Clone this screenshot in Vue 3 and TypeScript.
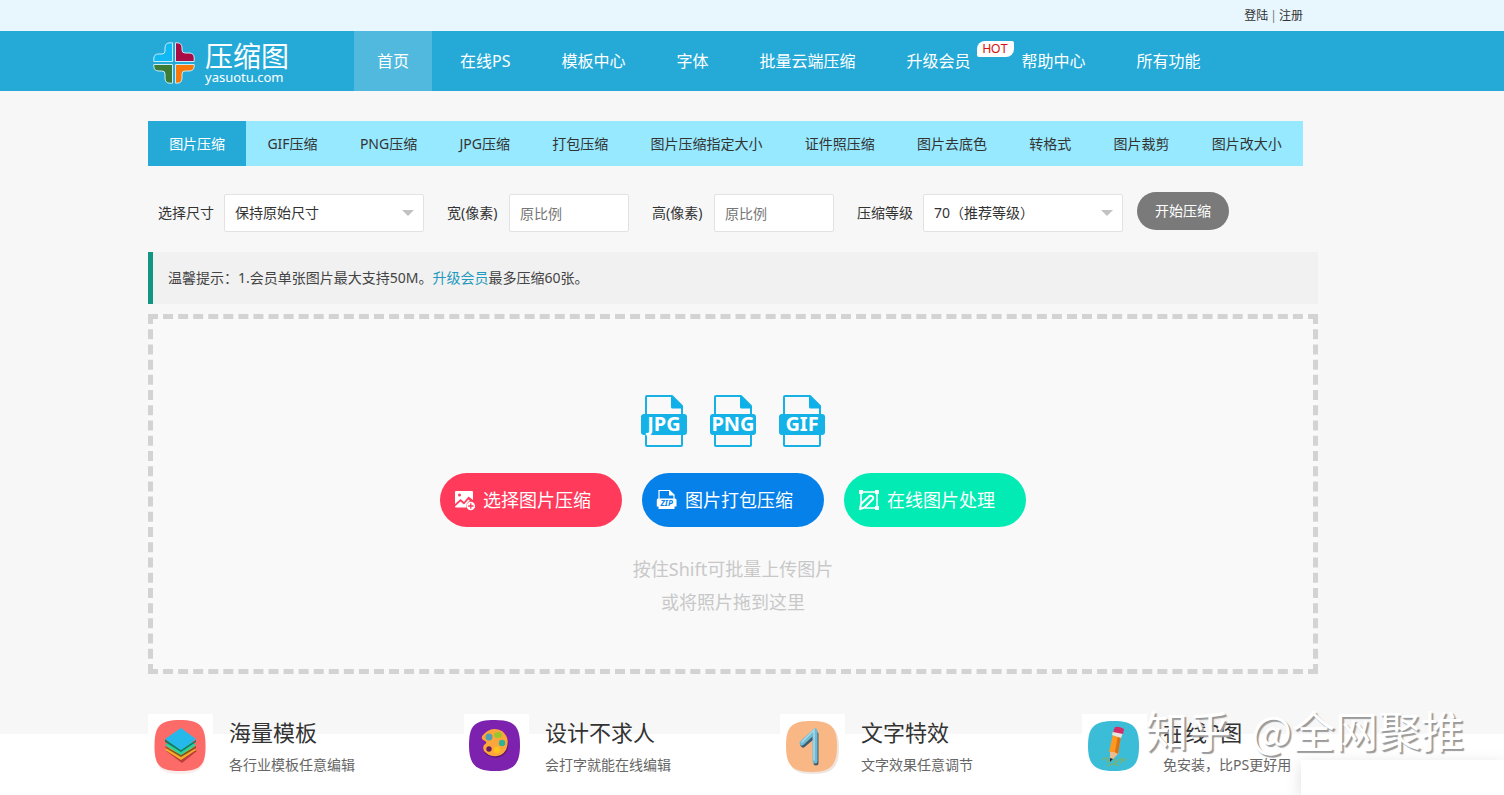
<script setup lang="ts">
import { ref } from 'vue'

interface NavItem {
  label: string
  hot?: boolean
}

const navItems: NavItem[] = [
  { label: '首页' },
  { label: '在线PS' },
  { label: '模板中心' },
  { label: '字体' },
  { label: '批量云端压缩' },
  { label: '升级会员', hot: true },
  { label: '帮助中心' },
  { label: '所有功能' },
]

const tabs: string[] = [
  '图片压缩', 'GIF压缩', 'PNG压缩', 'JPG压缩', '打包压缩', '图片压缩指定大小',
  '证件照压缩', '图片去底色', '转格式', '图片裁剪', '图片改大小',
]

const formats: string[] = ['JPG', 'PNG', 'GIF']

const activeNav = ref(0)
const activeTab = ref(0)
const size = ref('保持原始尺寸')
const level = ref('70（推荐等级）')
const imageWidth = ref('')
const imageHeight = ref('')
</script>

<template>
  <div class="page">
    <div class="topbar">
      <div class="container account">
        <a href="#">登陆</a><span class="bar">|</span><a href="#">注册</a>
      </div>
    </div>

    <header class="header">
      <div class="container header-inner">
        <a class="logo" href="#">
          <svg class="logo-mark" viewBox="0 0 42 42" width="42" height="42" aria-hidden="true">
            <g stroke="#c9ecf8" stroke-width="1" stroke-linejoin="round">
              <path fill="#10b8f4" d="M19.500.8V19.500H.8V17Q.8 12 5.500 12H9Q12 12 12 9V6Q12 .8 17 .8Z" />
              <path fill="#a90b44" d="M22.500.8H24Q29 .8 29 6V8Q29 11 32 11H36Q41.200 11 41.200 16V19.500H22.500Z" />
              <path fill="#3d7c36" d="M.8 22.500H19.500V41.200H17Q12 41.200 12 36V32Q12 29 9 29H6Q.8 29 .8 24Z" />
              <path fill="#fa7808" d="M22.500 22.500H41.200V24Q41.200 29 36 29H32Q29 29 29 32V36Q29 41.200 24 41.200H22.500Z" />
            </g>
          </svg>
          <span class="logo-text">
            <span class="logo-name">压缩图</span>
            <span class="logo-domain">yasuotu.com</span>
          </span>
        </a>
        <nav class="nav">
          <a
            v-for="(item, i) in navItems"
            :key="item.label"
            href="#"
            :class="{ active: i === activeNav }"
            @click.prevent="activeNav = i"
          >{{ item.label }}<span v-if="item.hot" class="hot">HOT</span></a>
        </nav>
      </div>
    </header>

    <main class="main">
      <div class="container">
        <nav class="tabs">
          <a
            v-for="(tab, i) in tabs"
            :key="tab"
            href="#"
            :class="{ active: i === activeTab }"
            @click.prevent="activeTab = i"
          >{{ tab }}</a>
        </nav>

        <form class="options" @submit.prevent>
          <div class="field">
            <label for="size">选择尺寸</label>
            <div class="select">
              <select id="size" v-model="size">
                <option>保持原始尺寸</option>
              </select>
            </div>
          </div>
          <div class="field">
            <label for="width">宽(像素)</label>
            <input id="width" v-model="imageWidth" type="text" placeholder="原比例" />
          </div>
          <div class="field">
            <label for="height">高(像素)</label>
            <input id="height" v-model="imageHeight" type="text" placeholder="原比例" />
          </div>
          <div class="field">
            <label for="level">压缩等级</label>
            <div class="select">
              <select id="level" v-model="level">
                <option>70（推荐等级）</option>
              </select>
            </div>
          </div>
          <button class="start" type="submit">开始压缩</button>
        </form>

        <p class="notice">温馨提示：1.会员单张图片最大支持50M。<a href="#">升级会员</a>最多压缩60张。</p>

        <section class="dropzone">
          <div class="formats">
            <svg v-for="name in formats" :key="name" viewBox="0 0 46 54" width="46" height="54">
              <path fill="none" stroke="#17b1e4" stroke-width="2" stroke-linejoin="round" d="M5 20V3Q5 2 6 2H31L41 12V20M5 38V51Q5 52 6 52H40Q41 52 41 51V38" />
              <path fill="#0db0e8" d="M30 1.500L41.500 13V14.500H31.500Q30 14.500 30 13Z" />
              <rect y="20" width="46" height="21" rx="3" fill="#14b2e6" />
              <text x="23" y="37" text-anchor="middle" class="format-name">{{ name }}</text>
            </svg>
          </div>
          <div class="actions">
            <button type="button" class="red">
              <svg viewBox="0 0 22 22" width="22" height="22" aria-hidden="true">
                <path fill="#fff" fill-rule="evenodd" d="M2 2H18Q19 2 19 3V11L14.500 7.500L10 13L6.500 10L1 15V3Q1 2 2 2ZM5.500 4.500A1.500 1.500 0 1 0 5.500 7.500A1.500 1.500 0 1 0 5.500 4.500Z" />
                <path fill="#fff" d="M1 17.500L6.500 12.500L10 15.500L14.300 10.500L16 12Q12 13 12.300 18.500H2Q1 18.500 1 17.500Z" />
                <circle cx="16.800" cy="17" r="4.300" fill="#fff" />
                <path stroke="#ff3a5a" stroke-width="1.300" d="M16.800 14.300V19.700M14.100 17H19.500" />
              </svg>选择图片压缩
            </button>
            <button type="button" class="blue">
              <svg viewBox="0 0 22 22" width="22" height="22" aria-hidden="true">
                <path fill="none" stroke="#fff" stroke-width="1.200" d="M3 10V1.500H13.500L18 6V10" />
                <path fill="#fff" d="M13 1L18.500 6.500H13Z" />
                <path fill="#fff" d="M2 9.500H19Q20.500 9.500 20.500 11V17.500H18.500V20H2.500V17.500H.8V11Q.8 9.500 2 9.500Z" />
                <text x="10.700" y="17" text-anchor="middle" class="zip">ZIP</text>
              </svg>图片打包压缩
            </button>
            <button type="button" class="green">
              <svg viewBox="0 0 22 22" width="22" height="22" aria-hidden="true">
                <path fill="none" stroke="#fff" stroke-width="1.500" d="M3 14V3H18M7 19H19V3" />
                <path fill="#fff" d="M1 1H5V5H1ZM17 1H21V5H17ZM17 17H21V21H17Z" />
                <path fill="none" stroke="#fff" stroke-width="2" stroke-linejoin="round" d="M2 20L3 15L11.500 7Q13.500 6 15 8Q15.500 9.500 14.500 10.500L6.500 18.500Z" />
              </svg>在线图片处理
            </button>
          </div>
          <p class="hint">按住Shift可批量上传图片<br />或将照片拖到这里</p>
        </section>
      </div>
    </main>

    <section class="features">
      <div class="container feature-grid">
        <article>
          <svg viewBox="0 0 65 65" width="65" height="65" aria-hidden="true">
            <rect width="65" height="65" fill="#fff" />
            <path fill="#f9eeed" d="M32 8C52 8 58 14 58 34S52 60 32 60 7 54 7 34 12 8 32 8Z" />
            <path fill="#fd6b69" d="M32 6C52 6 57.500 12 57.500 32S52 57 32 57 6.500 52 6.500 32 12 6 32 6Z" />
            <path fill="#b93f3c" d="M18 37L34 49L49 37L34 31Z" />
            <path fill="#f7a928" d="M17 36L33 46L48 36L33 27Z" />
            <path fill="#7d5224" d="M18 34L33 43L48 34V32L33 41L17 32Z" />
            <path fill="#29d49a" d="M17 31L33 41L48 31L33 22Z" />
            <path fill="#177967" d="M17 28L33 38L48 28V26L33 36L17 25Z" />
            <path fill="#25b9eb" d="M17 25L33 14L48 25L33 36Z" />
          </svg>
          <div>
            <h2>海量模板</h2>
            <p>各行业模板任意编辑</p>
          </div>
        </article>
        <article>
          <svg viewBox="0 0 65 65" width="65" height="65" aria-hidden="true">
            <rect width="65" height="65" fill="#fff" />
            <path fill="#7d22ae" d="M31 6C50 6 56 12 56 31S50 57 31 57 5 51 5 31 11 6 31 6Z" />
            <path fill="#5a176f" d="M20 22Q28 13 39 18Q47 25 43 37Q36 47 25 42Q18 39 20 32Q25 29 20 27Q17 25 20 22Z" />
            <path fill="#fda63b" d="M20 20Q28 12 38 17Q47 24 42 36Q36 45 25 41Q17 37 20 31Q25 28 19 26Q16 23 20 20Z" />
            <circle cx="25" cy="23" r="3.500" fill="#529fb4" />
            <ellipse cx="34" cy="21" rx="4" ry="3" fill="#9bc52c" />
            <circle cx="38" cy="29" r="3.200" fill="#30b395" />
            <circle cx="33" cy="36" r="3.300" fill="#ffc31b" />
            <circle cx="25" cy="35" r="2.700" fill="#6b1b61" />
          </svg>
          <div>
            <h2>设计不求人</h2>
            <p>会打字就能在线编辑</p>
          </div>
        </article>
        <article>
          <svg viewBox="0 0 65 65" width="65" height="65" aria-hidden="true">
            <rect width="65" height="65" fill="#fff" />
            <path fill="#efe5de" d="M33 9C52 9 59 15 59 34S53 60 33 60 8 54 8 34 14 9 33 9Z" />
            <path fill="#f8b785" d="M32 7C51 7 57 13 57 32S51 58 32 58 6 52 6 32 12 7 32 7Z" />
            <path fill="none" stroke="#405d6b" stroke-width="5" stroke-linecap="round" stroke-linejoin="round" d="M23 31L36 20V49" />
            <path fill="none" stroke="#70bad5" stroke-width="5" stroke-linecap="round" stroke-linejoin="round" d="M22 29L35 17V47" />
            <path fill="none" stroke="#acd9e6" stroke-width="1.500" stroke-linecap="round" d="M22 28L34 16V46" />
          </svg>
          <div>
            <h2>文字特效</h2>
            <p>文字效果任意调节</p>
          </div>
        </article>
        <article>
          <svg viewBox="0 0 65 65" width="65" height="65" aria-hidden="true">
            <rect width="65" height="65" fill="#fff" />
            <path fill="#3cbdd7" d="M32 7C51 7 57 13 57 32S51 57 32 57 6 51 6 32 12 7 32 7Z" />
            <path fill="none" stroke="#73b27b" stroke-width="1.500" d="M20 46Q26 41 26 48Q34 39 33 49Q43 40 39 49L44 44M25 52Q33 48 37 52" />
            <path fill="#e9bc91" d="M28 36L28 48L37 39Z" />
            <path fill="#ff981f" d="M31 20L39 22L36 40L32 38L27 38Z" />
            <path fill="#d97116" d="M36 21L39 22L36 40L33 38Z" />
            <path fill="#e7e5e0" d="M31 17L41 19L39 24L30 21Z" />
            <path fill="#d52b66" d="M33 13Q37 12 42 15L41 20L31 18Z" />
            <path fill="#25273b" d="M28 44L31 45L28 48Z" />
          </svg>
          <div>
            <h2>在线P图</h2>
            <p>免安装，比PS更好用</p>
          </div>
        </article>
      </div>
    </section>

    <div class="corner"></div>
    <div class="watermark"><span>知乎</span><span>@全网聚推</span></div>
  </div>
</template>

<style>
body {
  margin: 0;
}
</style>

<style scoped>
* {
  box-sizing: border-box;
}

.page {
  position: relative;
  display: flex;
  flex-direction: column;
  min-height: 100vh;
  overflow: hidden;
  background: #f7f7f7;
  color: #333;
  font: 14px/20px "Noto Sans", "Noto Sans CJK SC", sans-serif;
}

a {
  color: inherit;
  text-decoration: none;
}

button,
input,
select {
  font: inherit;
}

.topbar,
.header,
.main,
.features {
  padding-right: 38px;
}

.container {
  width: 100%;
  max-width: 1170px;
  margin: 0 auto;
}

.topbar {
  background: #e8f6fe;
}

.account {
  display: flex;
  justify-content: flex-end;
  gap: 2px;
  padding-right: 15px;
  font-size: 12px;
  line-height: 31px;
}

.bar {
  color: #777;
}

.header {
  background: #25aad8;
}

.header-inner {
  display: flex;
  height: 60px;
}

.logo {
  display: flex;
  flex: none;
  gap: 10px;
  width: 206px;
  padding: 11px 0 0 5px;
  color: #fff;
}

.logo-text {
  display: flex;
  flex-direction: column;
}

.logo-name {
  font-size: 28px;
  line-height: 28px;
}

.logo-domain {
  font-size: 13px;
  line-height: 14px;
}

.nav {
  display: flex;
  gap: 5px;
  color: #fff;
  font-size: 16px;
  line-height: 60px;
  white-space: nowrap;
}

.nav a {
  position: relative;
  padding: 0 23px;
}

.nav .active {
  background: #51b9dd;
}

.hot {
  position: absolute;
  top: 10px;
  right: -20px;
  width: 37px;
  border-radius: 8px 2px;
  background: #fff;
  color: #d8120c;
  font: 12px/16px "Liberation Sans", sans-serif;
  text-align: center;
}

.main {
  padding-top: 30px;
  padding-bottom: 40px;
}

.tabs {
  display: flex;
  margin-right: 15px;
  background: #97e9ff;
  line-height: 45px;
  white-space: nowrap;
}

.tabs a {
  flex: 1 1 auto;
  padding: 0 20px;
  text-align: center;
}

.tabs .active {
  background: #25aad8;
  color: #fff;
}

.options {
  display: flex;
  align-items: flex-end;
  height: 40px;
  margin: 26px 0 20px;
  padding-left: 10px;
  white-space: nowrap;
}

.field {
  display: flex;
  align-items: center;
  gap: 10px;
  margin-right: 23px;
}

.field:nth-last-child(2) {
  margin-right: 14px;
}

.field label {
  min-width: 52px;
}

.field input,
.field select {
  display: block;
  height: 38px;
  padding: 0 10px;
  border: 1px solid #e2e2e2;
  border-radius: 2px;
  background: #fff;
  color: #333;
}

.field input {
  width: 120px;
}

.field input::placeholder {
  color: #777;
}

.select {
  position: relative;
}

.select select {
  width: 200px;
  appearance: none;
}

.select::after {
  content: "";
  position: absolute;
  top: 16px;
  right: 10px;
  border: 6px solid transparent;
  border-top-color: #c2c2c2;
  border-bottom: 0;
  pointer-events: none;
}

.start {
  align-self: flex-start;
  width: 92px;
  height: 38px;
  padding: 0;
  border: 0;
  border-radius: 19px;
  background: #7a7a7a;
  color: #fff;
}

.notice {
  margin: 0 0 10px;
  padding: 16px 15px;
  border-left: 5px solid #109683;
  background: #f1f1f1;
  color: #444;
}

.notice a {
  color: #2399bd;
}

.dropzone {
  display: flex;
  flex-direction: column;
  align-items: center;
  height: 360px;
  padding-top: 75px;
  border: 5px dashed #d3d3d3;
  background: #f9f9f9;
}

.formats {
  display: flex;
  gap: 23px;
}

.format-name {
  fill: #fff;
  font: 700 20px "Noto Sans", sans-serif;
}

.actions {
  display: flex;
  gap: 20px;
  margin-top: 25px;
}

.actions button {
  display: flex;
  align-items: center;
  gap: 7px;
  width: 182px;
  height: 54px;
  padding: 0 0 0 14px;
  border: 0;
  border-radius: 27px;
  color: #fff;
  font-size: 18px;
  white-space: nowrap;
}

.actions .red {
  background: #ff3a5a;
}

.actions .blue {
  background: #0581e9;
}

.actions .green {
  background: #02ebb4;
}

.zip {
  fill: #0581e9;
  font: italic 700 8px "Noto Sans", sans-serif;
}

.hint {
  margin: 26px 0 0;
  color: #c8c8c8;
  font-size: 18px;
  line-height: 33px;
  text-align: center;
}

.features {
  flex: 1;
  background: linear-gradient(#f7f7f7 20px, #fff 20px);
}

.feature-grid {
  display: grid;
  grid-template-columns: 316fr 316fr 302fr 236fr;
}

article {
  display: flex;
  gap: 16px;
  height: 81px;
  white-space: nowrap;
}

h2 {
  margin: 0;
  font-size: 22px;
  font-weight: 400;
  line-height: 36px;
}

article p {
  margin: 5px 0 0;
  color: #666;
}

.corner {
  position: absolute;
  right: 0;
  bottom: 0;
  width: 203px;
  height: 35px;
  background: #fff;
  box-shadow: 0 4px 16px #0002;
}

.watermark {
  position: absolute;
  right: 40px;
  bottom: 36px;
  display: flex;
  gap: 20px;
  color: #fff;
  font: 43px/60px "Noto Sans CJK SC", sans-serif;
  text-shadow: 2px 2px 1px #999;
  white-space: nowrap;
  pointer-events: none;
}
</style>
